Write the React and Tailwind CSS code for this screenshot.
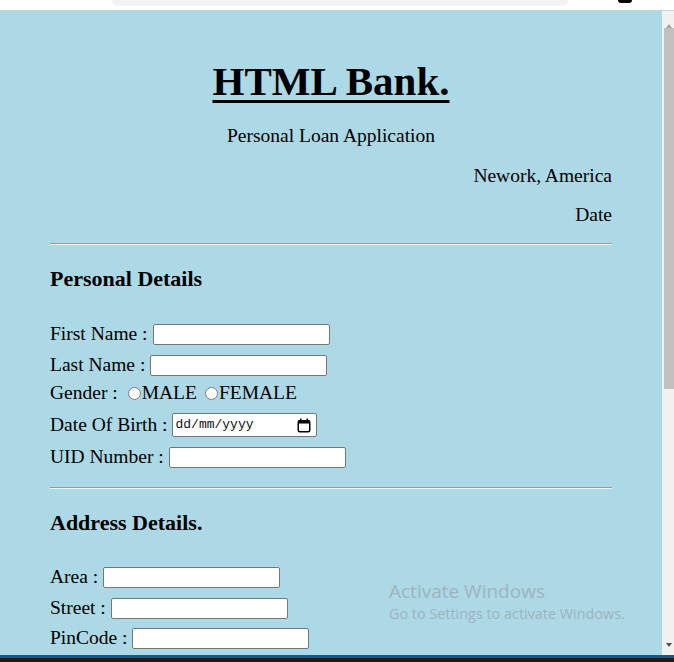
import React from 'react';

const serif = { fontFamily: '"Liberation Serif", "Times New Roman", serif' };

// one label + text box line of the form
const Field = ({ label, className = '' }) => (
    <div className={`flex items-center h-[24px] ${className}`}>
        <span>{label}</span>
        <input type="text" className="ml-[5px] w-[177px] h-[21px] bg-white border border-[#767676] rounded-[2px] outline-none" />
    </div>
);

const Rule = ({ className = '' }) => (
    <div className={`h-[2px] border-t border-[#9a9a9a] border-b border-b-[#eef4f6] ${className}`} />
);

const CalendarIcon = () => (
    <svg width="14" height="15" viewBox="0 0 14 15">
        <rect x="1.25" y="2.75" width="11.5" height="11" rx="1.5" fill="none" stroke="#000" strokeWidth="1.5" />
        <rect x="1" y="2.5" width="12" height="3" fill="#000" />
        <rect x="3" y="0.5" width="1.5" height="2.5" fill="#000" />
        <rect x="9.5" y="0.5" width="1.5" height="2.5" fill="#000" />
    </svg>
);

const App = () => {
    return (
        <div className="w-[674px] h-[662px] overflow-hidden relative bg-white flex flex-col">
            {/* bit of browser chrome above the page */}
            <div className="h-[10px] flex items-start flex-shrink-0">
                <div className="ml-[112px] w-[456px] h-[6px] bg-[#f1f3f4] rounded-b-[8px]" />
                <div className="ml-[50px] w-[14px] h-[3px] bg-black rounded-b-full" />
            </div>
            <div className="h-px bg-[#cdd1d4] flex-shrink-0" />

            <div className="flex flex-1 overflow-hidden">
                <main className="flex-1 bg-[#add8e6] px-[50px] text-[19.5px] text-black overflow-hidden" style={serif}>
                    <h1 className="mt-[45px] h-[50px] leading-[50px] text-center text-[41px] font-bold underline decoration-[3px] underline-offset-[5px]">
                        HTML Bank.
                    </h1>
                    <p className="mt-[18px] h-[24px] leading-[24px] text-center">Personal Loan Application</p>
                    <p className="mt-[16px] h-[24px] leading-[24px] text-right">Nework, America</p>
                    <p className="mt-[15px] h-[24px] leading-[24px] text-right">Date</p>

                    <Rule className="mt-[16px]" />

                    <h3 className="mt-[21px] h-[26px] leading-[26px] text-[22px] font-bold">Personal Details</h3>

                    <Field label="First Name :" className="mt-[30px]" />
                    <Field label="Last Name :" className="mt-[7px]" />
                    <div className="mt-[4px] flex items-center h-[24px]">
                        <span>Gender :</span>
                        <input type="radio" name="gender" className="ml-[10px] mr-[1px] w-[13px] h-[13px]" />
                        <span>MALE</span>
                        <input type="radio" name="gender" className="ml-[8px] mr-[1px] w-[13px] h-[13px]" />
                        <span>FEMALE</span>
                    </div>
                    <div className="mt-[8px] flex items-center h-[24px]">
                        <span>Date Of Birth :</span>
                        <div className="ml-[4px] w-[145px] h-[24px] bg-white border border-[#767676] rounded-[2px] flex items-center justify-between pl-[3px] pr-[5px]">
                            <span className="text-[13px] text-[#101010]" style={{ fontFamily: '"Liberation Mono", "DejaVu Sans Mono", monospace' }}>dd/mm/yyyy</span>
                            <CalendarIcon />
                        </div>
                    </div>
                    <Field label="UID Number :" className="mt-[8px]" />

                    <Rule className="mt-[18px]" />

                    <h3 className="mt-[21px] h-[26px] leading-[26px] text-[22px] font-bold">Address Details.</h3>

                    <Field label="Area :" className="mt-[29px]" />
                    <Field label="Street :" className="mt-[7px]" />
                    <Field label="PinCode :" className="mt-[6px]" />
                </main>

                {/* scrollbar */}
                <div className="w-[12px] bg-[#f1f1f1] flex flex-col items-stretch flex-shrink-0">
                    <div className="h-[17px] flex items-end justify-center pl-[1px]">
                        <div className="w-0 h-0 border-l-[3.5px] border-r-[3.5px] border-b-[4px] border-l-transparent border-r-transparent border-b-[#a3a3a3]" />
                    </div>
                    <div className="ml-[2px] h-[361px] bg-[#c1c1c1]" />
                    <div className="flex-1" />
                    <div className="h-[12px] flex items-start justify-center pl-[1px]">
                        <div className="w-0 h-0 border-l-[3.5px] border-r-[3.5px] border-t-[4px] border-l-transparent border-r-transparent border-t-[#505050]" />
                    </div>
                </div>
            </div>

            <div className="h-[3px] bg-[#105a96] flex-shrink-0" />
            <div className="h-[4px] bg-[#1b1b1b] flex-shrink-0" />

            {/* windows activation watermark */}
            <div className="absolute left-[389px] top-[579px] text-[#9fb3bd] pointer-events-none" style={{ fontFamily: '"Open Sans", "Noto Sans", sans-serif' }}>
                <div className="text-[19px] leading-[25px]">Activate Windows</div>
                <div className="text-[14.4px] leading-[20px]">Go to Settings to activate Windows.</div>
            </div>
        </div>
    );
};

export default App;
